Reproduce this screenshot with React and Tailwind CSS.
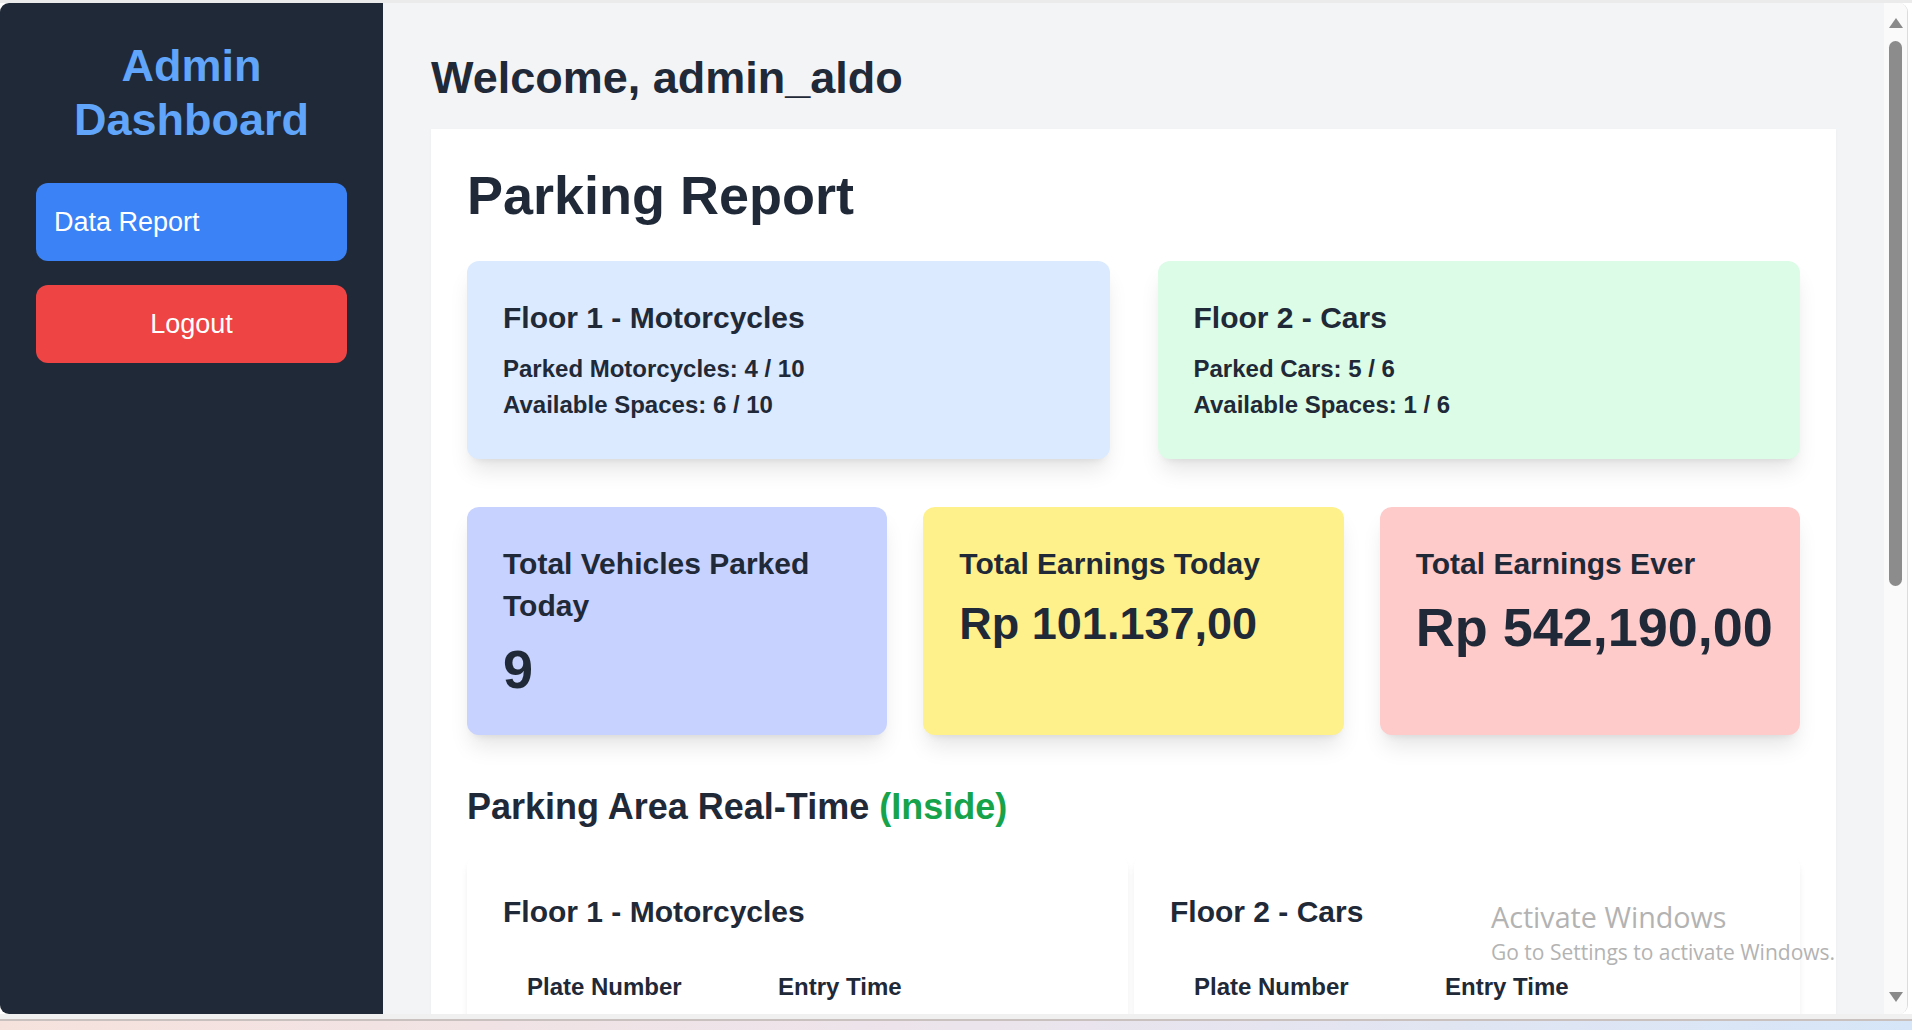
import React from 'react'

const font = "font-['Liberation_Sans',Arial,sans-serif]"
const cardShadow = 'shadow-[0_15px_22px_-4px_rgba(0,0,0,0.1),0_6px_9px_-6px_rgba(0,0,0,0.1)]'

function FloorStat({ title, lines, bg }) {
  return (
    <div className={`${bg} rounded-[12px] p-[36px] ${cardShadow}`}>
      <h3 className="text-[30px] leading-[42px] font-semibold">{title}</h3>
      <div className="mt-[12px] text-[24px] leading-[36px] font-semibold">
        {lines.map(l => <p key={l}>{l}</p>)}
      </div>
    </div>
  )
}

function Stat({ title, value, bg, size }) {
  return (
    <div className={`${bg} rounded-[12px] p-[36px] ${cardShadow}`}>
      <h3 className="text-[30px] leading-[42px] font-semibold">{title}</h3>
      <p className={`mt-[12px] font-bold whitespace-nowrap ${size}`}>{value}</p>
    </div>
  )
}

// only the header row is on screen; the body scrolls below the fold
function LiveTable({ title }) {
  return (
    <div className="bg-white rounded-[12px] p-[36px] shadow-[0_6px_9px_-1px_rgba(0,0,0,0.06),0_3px_6px_-3px_rgba(0,0,0,0.06)]">
      <h3 className="text-[30px] leading-[42px] font-semibold mb-[24px]">{title}</h3>
      <table className="text-left">
        <thead>
          <tr>
            <th className="w-[251px] px-[24px] py-[12px] text-[24px] leading-[36px] font-semibold">Plate Number</th>
            <th className="px-[24px] py-[12px] text-[24px] leading-[36px] font-semibold">Entry Time</th>
          </tr>
        </thead>
      </table>
    </div>
  )
}

export default function App() {
  return (
    <div className={`relative w-[1912px] h-[1030px] overflow-hidden bg-white flex flex-col ${font}`}>
      <div className="h-[3px] bg-[#ebebeb] shrink-0" />

      {/* Browser window */}
      <div className="flex w-[1908px] h-[1011px] shrink-0 rounded-[9px] overflow-hidden border-r border-[#dcdcdc]">
        {/* Sidebar */}
        <aside className="w-[383px] shrink-0 bg-[#1f2937] p-[36px] flex flex-col">
          <h1 className="text-center text-[45px] leading-[54px] font-bold text-[#60a5fa] mb-[36px]">
            Admin Dashboard
          </h1>
          <a className="block w-full rounded-[12px] bg-[#3b82f6] px-[18px] py-[18px] text-[27px] leading-[42px] text-white">
            Data Report
          </a>
          <button className="mt-[24px] w-full rounded-[12px] bg-[#ef4444] py-[18px] text-[27px] leading-[42px] text-white">
            Logout
          </button>
        </aside>

        {/* Main */}
        <main className="flex-1 bg-[#f3f4f6] p-[48px] overflow-hidden text-[#1f2937]">
          <h2 className="text-[45px] leading-[54px] font-bold mb-[24px]">Welcome, admin_aldo</h2>
          <div className="bg-white p-[36px] shadow-[0_1px_3px_rgba(0,0,0,0.04)]">
            <h1 className="text-[54px] leading-[60px] font-bold mb-[36px]">Parking Report</h1>

            <div className="grid grid-cols-2 gap-[48px] mb-[48px]">
              <FloorStat
                bg="bg-[#dbeafe]"
                title="Floor 1 - Motorcycles"
                lines={['Parked Motorcycles: 4 / 10', 'Available Spaces: 6 / 10']}
              />
              <FloorStat
                bg="bg-[#dcfce7]"
                title="Floor 2 - Cars"
                lines={['Parked Cars: 5 / 6', 'Available Spaces: 1 / 6']}
              />
            </div>

            <div className="grid grid-cols-3 gap-[36px] mb-[48px]">
              <Stat bg="bg-[#c7d2fe]" title="Total Vehicles Parked Today" value="9" size="text-[54px] leading-[60px]" />
              <Stat bg="bg-[#fef08a]" title="Total Earnings Today" value="Rp 101.137,00" size="text-[45px] leading-[54px]" />
              <Stat bg="bg-[#fecaca]" title="Total Earnings Ever" value="Rp 542,190,00" size="text-[54px] leading-[60px]" />
            </div>

            <h2 className="text-[36px] leading-[48px] font-semibold mb-[24px]">
              Parking Area Real-Time <span className="text-[#16a34a]">(Inside)</span>
            </h2>
            <div className="grid grid-cols-[661px_1fr] gap-[6px]">
              <LiveTable title="Floor 1 - Motorcycles" />
              <LiveTable title="Floor 2 - Cars" />
            </div>
          </div>
        </main>

        {/* Scrollbar */}
        <div className="w-[23px] shrink-0 bg-[#fafafa] flex flex-col items-center pt-[15px] pb-[12px]">
          <div className="w-0 h-0 border-x-[7px] border-x-transparent border-b-[10px] border-b-[#8a8a8a]" />
          <div className="mt-[13px] w-[13px] h-[545px] rounded-full bg-[#8c8c8c]" />
          <div className="flex-1" />
          <div className="w-0 h-0 border-x-[7px] border-x-transparent border-t-[10px] border-t-[#8a8a8a]" />
        </div>
      </div>

      {/* Window bottom edge + desktop */}
      <div className="h-[5px] bg-[#f0f0f0] shrink-0" />
      <div className="h-[2px] bg-[#c9c0c0] shrink-0" />
      <div className="flex-1 bg-gradient-to-r from-[#f6e2dd] via-[#ece4ec] to-[#d6e6f8]" />

      {/* Windows activation watermark */}
      <div className="absolute left-[1491px] top-[903px] font-['Open_Sans',sans-serif] text-[#b3b3b3] pointer-events-none">
        <p className="text-[28.7px] leading-none">Activate Windows</p>
        <p className="mt-[10px] text-[21px] leading-none">Go to Settings to activate Windows.</p>
      </div>
    </div>
  )
}
